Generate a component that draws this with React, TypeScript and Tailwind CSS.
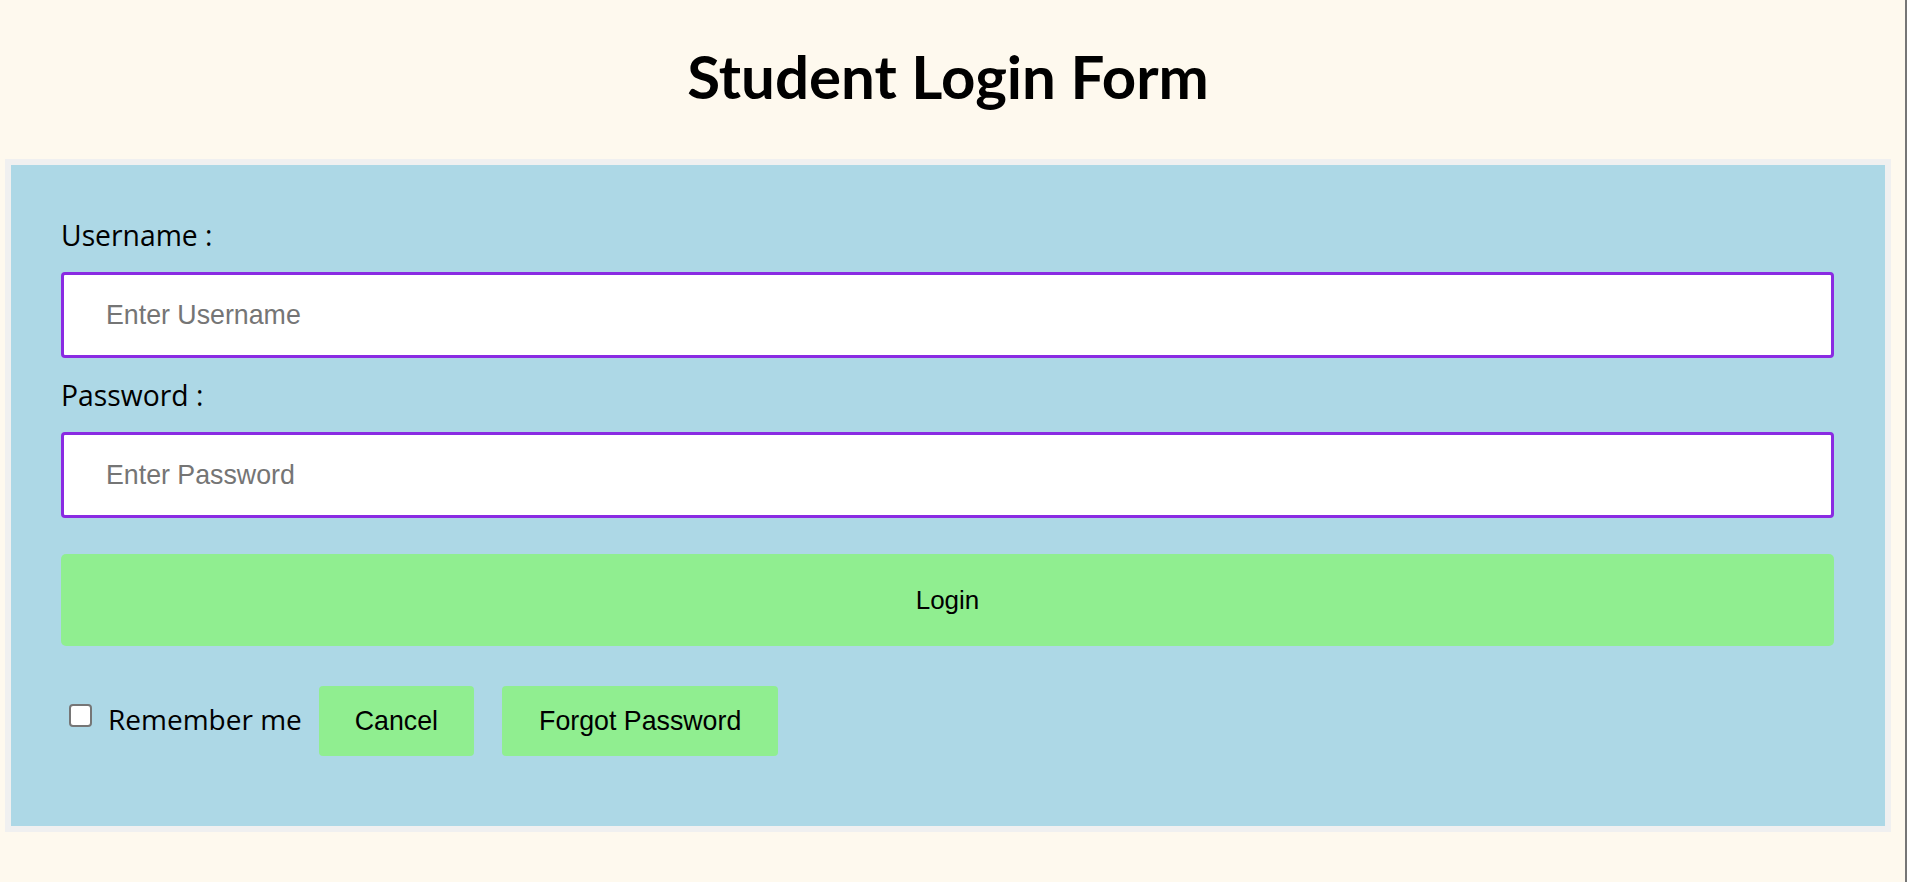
import React from "react";

export default function App() {
  return (
    <div className="flex min-h-[882px] w-[1907px] bg-[#fef9ee]">
      <div className="flex w-[1905px] flex-col pl-[5px]">
        <h1 className="h-[159px] w-[1886px] pt-[46px] text-center font-['Lato',sans-serif] text-[60px] font-bold leading-[60px] text-black">
          Student Login Form
        </h1>
        <form
          className="flex w-[1886px] flex-col border-[6px] border-[#f0f0f0] bg-[#add8e6] pb-[70px] pl-[50px] pr-[51px] pt-[51px]"
          onSubmit={(e) => e.preventDefault()}
        >
          <label className="block font-['Open_Sans',sans-serif] text-[28.3px] leading-[38px] text-black">
            Username :
          </label>
          <input
            type="text"
            placeholder="Enter Username"
            className="mt-[18px] h-[86px] w-full rounded-[4px] border-[3px] border-[#8a2be2] bg-white pl-[42px] font-['Liberation_Sans',Arial,sans-serif] text-[26.75px] text-black outline-none placeholder:text-[#757575]"
          />
          <label className="mt-[18px] block font-['Open_Sans',sans-serif] text-[28.3px] leading-[38px] text-black">
            Password :
          </label>
          <input
            type="password"
            placeholder="Enter Password"
            className="mt-[18px] h-[86px] w-full rounded-[4px] border-[3px] border-[#8a2be2] bg-white pl-[42px] font-['Liberation_Sans',Arial,sans-serif] text-[26.75px] text-black outline-none placeholder:text-[#757575]"
          />
          <button
            type="submit"
            className="mt-[36px] h-[92px] w-full rounded-[5px] bg-[#90ee90] font-['Liberation_Sans',Arial,sans-serif] text-[26px] text-black"
          >
            Login
          </button>
          <div className="mt-[40px] flex h-[70px] items-center">
            <input
              type="checkbox"
              className="ml-[8px] mt-[-11px] h-[23px] w-[23px] appearance-none rounded-[4px] border-[2px] border-[#767676] bg-white"
            />
            <span className="mb-[4px] ml-[16px] font-['Open_Sans',sans-serif] text-[28px] leading-[38px] text-black">
              Remember me
            </span>
            <button
              type="button"
              className="ml-[17px] h-[70px] rounded-[4px] bg-[#90ee90] px-[36px] font-['Liberation_Sans',Arial,sans-serif] text-[26.75px] text-black"
            >
              Cancel
            </button>
            <button
              type="button"
              className="ml-[28px] h-[70px] rounded-[4px] bg-[#90ee90] px-[37px] font-['Liberation_Sans',Arial,sans-serif] text-[26.75px] text-black"
            >
              Forgot Password
            </button>
          </div>
        </form>
      </div>
      <div className="w-[2px] bg-[#767676]" />
    </div>
  );
}
